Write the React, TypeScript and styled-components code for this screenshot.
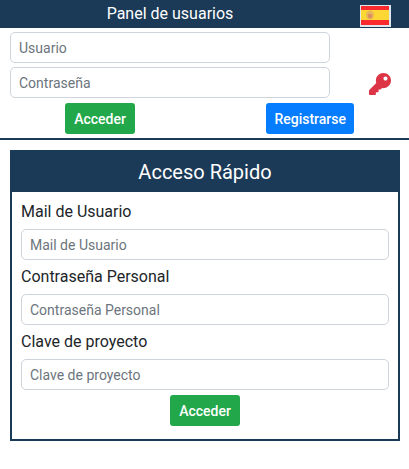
import React from 'react';
import styled, { createGlobalStyle } from 'styled-components';
import { FaKey } from 'react-icons/fa';

const GlobalStyle = createGlobalStyle`
	html,
	body {
		margin: 0;
		padding: 0;
		background: #fff;
		font-family: Roboto, 'Liberation Sans', sans-serif;
	}
	* {
		box-sizing: border-box;
	}
`;

const NAVY = '#1b3a57';

const fields = ['Mail de Usuario', 'Contraseña Personal', 'Clave de proyecto'];

const SpainFlag = () => (
	<svg width='31' height='22' viewBox='0 0 31 22' aria-label='España'>
		<rect width='31' height='22' fill='#dfe6ec' />
		<rect x='1' y='1' width='28' height='4' fill='#fb2a2f' />
		<rect x='1' y='5' width='28' height='10' fill='#fdd835' />
		<rect x='1' y='15' width='28' height='5' fill='#fb2a2f' />
		<ellipse cx='10' cy='10' rx='4' ry='4.5' fill='#e8b45c' />
		<rect x='8' y='9' width='4' height='4' rx='1' fill='#dc8f5e' />
	</svg>
);

const App = () => {
	return (
		<>
			<GlobalStyle />
			<Page>
				<TopSection>
					<Header>
						<HeaderTitle>Panel de usuarios</HeaderTitle>
						<FlagSlot>
							<SpainFlag />
						</FlagSlot>
					</Header>
					<LoginRow>
						<LoginInputs>
							<Input placeholder='Usuario' />
							<Input placeholder='Contraseña' />
						</LoginInputs>
						<KeySlot>
							<FaKey size={22} color='#dc3545' />
						</KeySlot>
					</LoginRow>
					<LoginActions>
						<Button $variant='success'>Acceder</Button>
						<Button $variant='primary'>Registrarse</Button>
					</LoginActions>
				</TopSection>
				<Panel>
					<PanelTitle>Acceso Rápido</PanelTitle>
					<PanelBody>
						{fields.map((field) => (
							<Field key={field}>
								<Label>{field}</Label>
								<Input placeholder={field} />
							</Field>
						))}
						<PanelActions>
							<Button $variant='success'>Acceder</Button>
						</PanelActions>
					</PanelBody>
				</Panel>
			</Page>
		</>
	);
};
export default App;

const Page = styled.div`
	width: 409px;
	height: 469px;
	overflow: hidden;
`;

const TopSection = styled.section`
	height: 140px;
	border-bottom: 2px solid ${NAVY};
`;

const Header = styled.header`
	height: 28px;
	background: ${NAVY};
	display: grid;
	grid-template-columns: 340px 1fr;
	align-items: center;
`;

const HeaderTitle = styled.h1`
	margin: 0;
	color: #fff;
	font-size: 16px;
	font-weight: 400;
	line-height: 24px;
	text-align: center;
`;

const FlagSlot = styled.div`
	display: flex;
	padding-left: 20px;
	padding-top: 3px;
`;

const LoginRow = styled.div`
	display: grid;
	grid-template-columns: 340px 1fr;
	padding-top: 4px;
`;

const LoginInputs = styled.div`
	display: flex;
	flex-direction: column;
	gap: 4px;
	padding: 0 10px;
`;

const KeySlot = styled.div`
	display: flex;
	justify-content: flex-start;
	padding: 41px 0 0 29px;
`;

const Input = styled.input`
	display: block;
	width: 100%;
	height: 31px;
	padding: 0 8px;
	border: 1px solid #ced4da;
	border-radius: 5px;
	background: #fff;
	color: #495057;
	font-family: inherit;
	font-size: 14px;
	&::placeholder {
		color: #6c757d;
		opacity: 1;
	}
`;

const LoginActions = styled.div`
	display: flex;
	justify-content: space-between;
	padding: 5px 55px 0 65px;
`;

const Button = styled.button<{ $variant: 'success' | 'primary' }>`
	height: 31px;
	min-width: 70px;
	padding: 0 8px;
	border: 0;
	border-radius: 3px;
	background: ${({ $variant }) => ($variant === 'success' ? '#22a84a' : '#067dff')};
	color: #fff;
	font-family: inherit;
	font-size: 14px;
	font-weight: 500;
`;

const Panel = styled.section`
	width: 390px;
	height: 291px;
	margin: 10px 0 0 10px;
	border: 2px solid ${NAVY};
`;

const PanelTitle = styled.h2`
	margin: 0;
	height: 40px;
	background: ${NAVY};
	color: #fff;
	font-size: 20px;
	font-weight: 400;
	line-height: 40px;
	text-align: center;
`;

const PanelBody = styled.div`
	display: flex;
	flex-direction: column;
	padding: 8px 9px 0;
`;

const Field = styled.div`
	display: flex;
	flex-direction: column;
	margin-bottom: 5px;
`;

const Label = styled.label`
	font-size: 16px;
	line-height: 24px;
	margin-bottom: 5px;
	color: #212529;
`;

const PanelActions = styled.div`
	display: flex;
	justify-content: center;
`;
